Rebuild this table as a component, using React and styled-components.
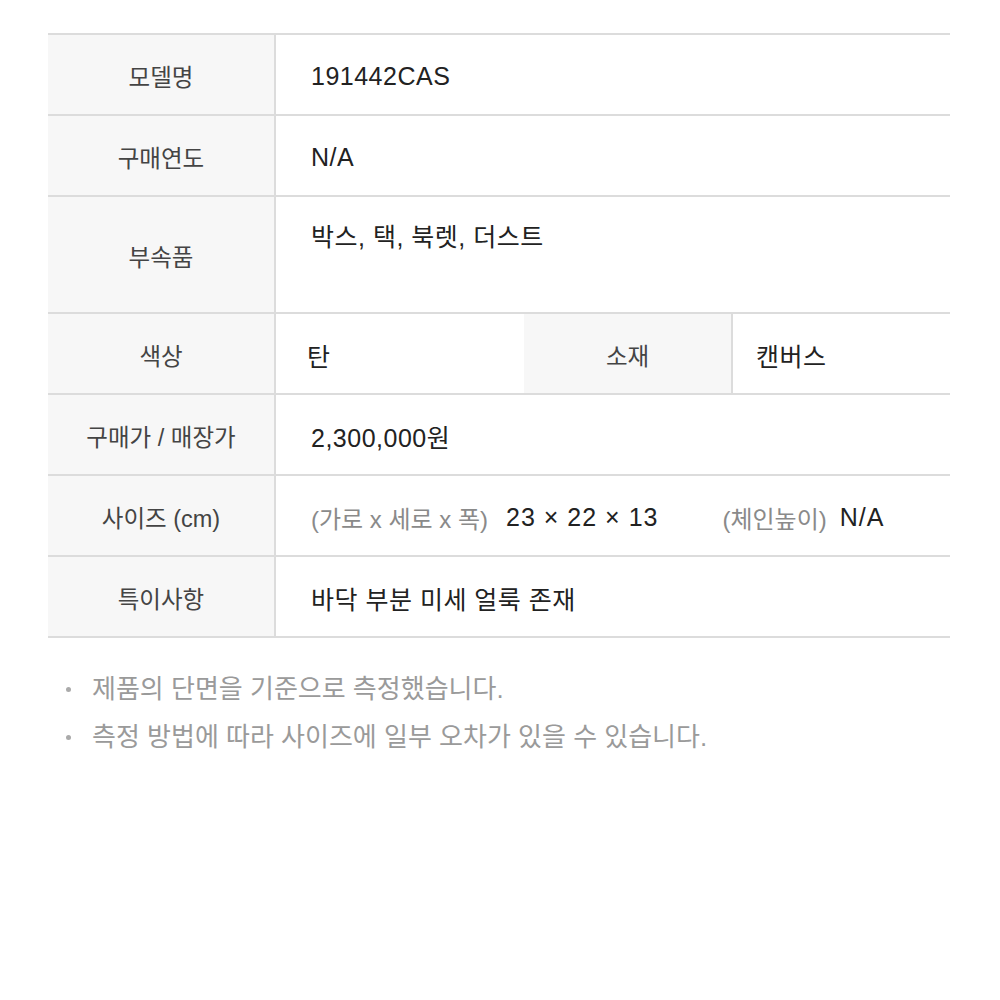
import React from "react";
import styled, { createGlobalStyle } from "styled-components";

const Global = createGlobalStyle`
  *, *::before, *::after { box-sizing: border-box; }
  html, body { margin: 0; padding: 0; background: #fff; }
  body { font-family: "Liberation Sans", "Noto Sans CJK KR", sans-serif; }
`;

const Page = styled.div`
  padding: 33px 50px 0 48px;
  width: 1000px;
`;

const Table = styled.div`
  border-top: 2px solid #dcdcdc;
  display: flex;
  flex-direction: column;
`;

const Row = styled.div`
  display: flex;
  height: ${(p) => p.$h || 81}px;
  border-bottom: 2px solid #dcdcdc;
`;

const Label = styled.div`
  width: ${(p) => p.$w || 228}px;
  flex: none;
  background: #f7f7f7;
  border-right: 2px solid #dcdcdc;
  display: flex;
  align-items: center;
  justify-content: center;
  padding-top: 3px;
  font-size: 23.5px;
  color: #444;
`;

const Value = styled.div`
  flex: ${(p) => (p.$w ? "none" : "1")};
  width: ${(p) => (p.$w ? p.$w + "px" : "auto")};
  display: flex;
  align-items: ${(p) => (p.$top ? "flex-start" : "center")};
  padding-left: ${(p) => p.$pl ?? 35}px;
  padding-top: ${(p) => (p.$top ? 20 : 3)}px;
  font-size: 25px;
  color: #222;
  letter-spacing: 0.5px;
  white-space: nowrap;
`;

const Muted = styled.span`
  color: #8a8a8a;
  font-size: 24px;
  letter-spacing: 0;
  margin-right: ${(p) => p.$mr || 0}px;
`;

const Dim = styled.span`
  letter-spacing: 1px;
  margin-right: ${(p) => p.$mr || 0}px;
`;

const Notes = styled.ul`
  list-style: none;
  margin: 35px 0 0;
  padding: 0 0 0 18px;
  display: flex;
  flex-direction: column;
  gap: 16px;
`;

const Note = styled.li`
  font-size: 26px;
  color: #9a9a9a;
  line-height: 32px;
  display: flex;
  align-items: center;
  &::before {
    content: "";
    width: 5px;
    height: 5px;
    border-radius: 50%;
    background: #aaa;
    margin-right: 21px;
    flex: none;
  }
`;

export default function App() {
  return (
    <>
      <Global />
      <Page>
        <Table>
          <Row>
            <Label>모델명</Label>
            <Value>191442CAS</Value>
          </Row>
          <Row>
            <Label>구매연도</Label>
            <Value>N/A</Value>
          </Row>
          <Row $h={117}>
            <Label>부속품</Label>
            <Value $top>박스, 택, 북렛, 더스트</Value>
          </Row>
          <Row>
            <Label>색상</Label>
            <Value $w={248} $pl={31}>탄</Value>
            <Label $w={209}>소재</Label>
            <Value $pl={23}>캔버스</Value>
          </Row>
          <Row>
            <Label>구매가 / 매장가</Label>
            <Value>2,300,000원</Value>
          </Row>
          <Row>
            <Label>사이즈 (cm)</Label>
            <Value>
              <Muted $mr={18}>(가로 x 세로 x 폭)</Muted>
              <Dim $mr={64}>23 × 22 × 13</Dim>
              <Muted $mr={13}>(체인높이)</Muted>
              <Dim>N/A</Dim>
            </Value>
          </Row>
          <Row>
            <Label>특이사항</Label>
            <Value>바닥 부분 미세 얼룩 존재</Value>
          </Row>
        </Table>
        <Notes>
          <Note>제품의 단면을 기준으로 측정했습니다.</Note>
          <Note>측정 방법에 따라 사이즈에 일부 오차가 있을 수 있습니다.</Note>
        </Notes>
      </Page>
    </>
  );
}
